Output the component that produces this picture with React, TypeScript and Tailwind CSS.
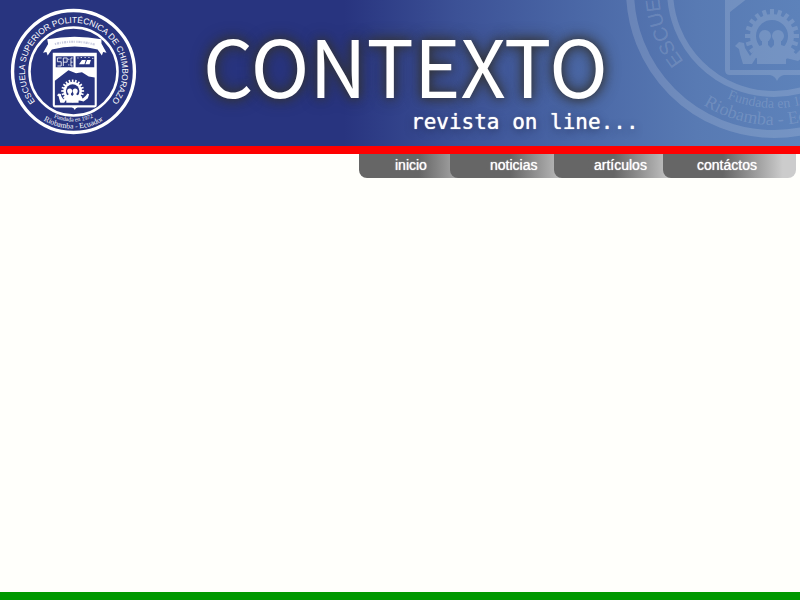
import { useId } from "react";

const GEAR_TEETH = Array.from({ length: 20 }, (_, i) => i * 18);

function Seal({ className }: { className: string }) {
  const id = useId();
  const mask = `${id}-shield`;
  const gear = `${id}-gear`;
  const rim = `${id}-rim`;
  const founded = `${id}-founded`;
  const city = `${id}-city`;

  return (
    <svg viewBox="-150 -150 300 300" className={className} aria-hidden="true">
      <defs>
        <path id={rim} d="M0 115A115 115 0 0 1 0 -115A115 115 0 0 1 0 115" />
        <path id={founded} d="M-118 0A118 118 0 0 0 118 0" />
        <path id={city} d="M-135 0A135 135 0 0 0 135 0" />
        <mask id={gear} maskUnits="userSpaceOnUse" x="-60" y="-50" width="120" height="145">
          <rect x="-60" y="-50" width="120" height="124" fill="white" />
          <circle cx="-2" cy="46" r="16" fill="black" />
        </mask>
        <mask id={mask} maskUnits="userSpaceOnUse" x="-60" y="-50" width="120" height="145">
          <rect x="-60" y="-50" width="120" height="145" fill="white" />
          <rect x="-42" y="-36" width="42" height="26" fill="black" />
          <rect x="5" y="-36" width="44" height="26" fill="black" />
          <path d="M-44 22L-12 -3L6 4L20 2L36 12L50 14V80H-44Z" fill="black" />
          <path
            d="M-38 -32H-28M-38 -32V-23H-29V-13H-38M-24 -13V-32H-15V-22H-24M-11 -30V-27M-11 -17V-14M-6 -32H-2M-6 -32V-13M-6 -22H-2M-6 -13H-2"
            stroke="white"
            strokeWidth="2"
            fill="none"
          />
          <path d="M13 -17L20 -27H29L26 -17ZM28 -17L32 -27H41L38 -17Z" fill="white" />
          <path d="M9 -32H12M17 -33H20M26 -33H29M35 -33H38M44 -31H47" stroke="white" strokeWidth="2" />
          <g mask={`url(#${gear})`}>
            <circle cx="-2" cy="46" r="22" fill="white" />
            {GEAR_TEETH.map((angle) => (
              <rect
                key={angle}
                x="-4"
                y="19"
                width="4"
                height="8"
                fill="white"
                transform={`rotate(${angle} -2 46)`}
              />
            ))}
          </g>
          <ellipse cx="-9" cy="46" rx="6" ry="6" fill="white" />
          <ellipse cx="4" cy="46" rx="6" ry="6" fill="white" />
          <path
            d="M-12 50H-6V55L-3 58L0 55V50H7V55L13 57L22 64L29 57L33 52L37 54L34 63L24 71L12 68V74H-17V66L-22 74H-31L-34 64L-35 59L-39 56L-35 52L-30 53L-29 58L-24 66L-17 57L-12 55Z"
            fill="white"
          />
        </mask>
      </defs>

      <circle r="144" fill="none" stroke="currentColor" strokeWidth="8" />
      <circle r="104" fill="none" stroke="currentColor" strokeWidth="6" />

      <path
        d="M-49 -44H55V80Q55 85 50 85H10Q5 86 3 91Q1 86 -4 85H-44Q-49 85 -49 80Z"
        fill="currentColor"
        mask={`url(#${mask})`}
      />
      <path
        d="M-62 -76Q3 -88 66 -76L66 -66L78 -44L70 -46L67 -38L57 -52Q3 -66 -51 -52L-61 -38L-64 -46L-72 -44L-60 -65Z"
        fill="currentColor"
      />
      <path
        d="M-44 -65Q3 -76 50 -64"
        fill="none"
        stroke="#28347f"
        strokeOpacity="0.25"
        strokeWidth="5"
        strokeDasharray="3 2 5 2 2 3"
      />

      <text className="fill-current font-['Liberation_Sans',sans-serif] text-[20px]" textAnchor="middle">
        <textPath href={`#${rim}`} startOffset="50%">
          ESCUELA SUPERIOR POLITÉCNICA DE CHIMBORAZO
        </textPath>
      </text>
      <text className="fill-current font-['Liberation_Serif',serif] text-[14px]" textAnchor="middle">
        <textPath href={`#${founded}`} startOffset="50%">
          Fundada en 1972
        </textPath>
      </text>
      <text className="fill-current font-['Liberation_Serif',serif] text-[18px]" textAnchor="middle">
        <textPath href={`#${city}`} startOffset="50%">
          Riobamba - Ecuador
        </textPath>
      </text>
    </svg>
  );
}

const TABS = [
  { label: "inicio", className: "pl-9" },
  { label: "noticias", className: "-ml-[42px] pl-10" },
  { label: "artículos", className: "-ml-[29px] pl-10" },
  { label: "contáctos", className: "-ml-6 pl-[34px]" },
];

export default function App() {
  return (
    <div className="flex min-h-screen flex-col border-b-8 border-[#009900] bg-[#fffffb] font-['Liberation_Sans',Arial,sans-serif]">
      <header className="relative overflow-hidden border-b-8 border-[#ff0000] bg-[linear-gradient(to_right,#28347f_0%,#28347f_43%,#3c5196_57%,#4a67a6_72%,#587ab3_87%,#5d82ba_100%)]">
        <Seal className="absolute -top-40 -right-31 size-75 text-white/15" />
        <div className="relative flex h-[146px] items-start pt-2 pl-2.5 text-white">
          <Seal className="size-[127px] shrink-0" />
          <div className="ml-[66px] flex flex-col pt-3.5">
            <h1 className="font-['Noto_Sans_CJK_SC',sans-serif] text-[79px] leading-[84px] [text-shadow:0_0_10px_#333,0_0_16px_#333]">
              CONTEXTO
            </h1>
            <p className="pt-0.5 pl-[208px] font-['DejaVu_Sans_Mono',monospace] text-[21px] leading-7 whitespace-nowrap [text-shadow:0_0_1px_#fff,0_2px_8px_#222b50]">
              revista on line...
            </p>
          </div>
        </div>
      </header>
      <nav aria-label="Principal" className="flex justify-end pr-1">
        {TABS.map((tab) => (
          <a
            key={tab.label}
            href="#"
            className={`relative h-6 w-[133px] rounded-b-lg bg-linear-to-r from-[#666] from-45% to-[#ccc] to-90% text-sm leading-[22px] text-white [text-shadow:0_0_1px_#fff] ${tab.className}`}
          >
            {tab.label}
          </a>
        ))}
      </nav>
      <main className="grow" />
    </div>
  );
}
